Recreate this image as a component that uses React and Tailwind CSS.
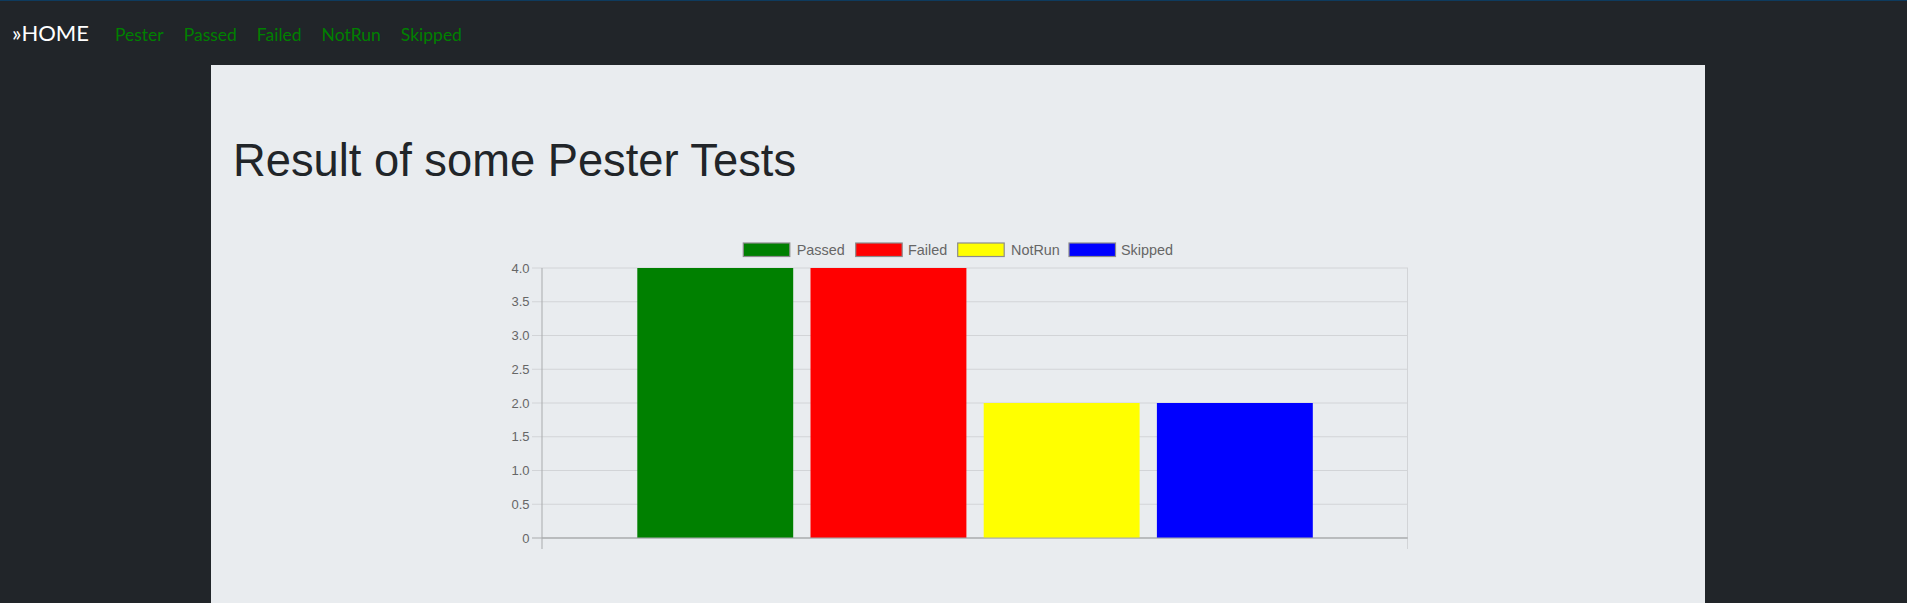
import React from "react";

// Chart data.
const results = [
    { name: "Passed", value: 4, color: "#008000" },
    { name: "Failed", value: 4, color: "#ff0000" },
    { name: "NotRun", value: 2, color: "#ffff00" },
    { name: "Skipped", value: 2, color: "#0000ff" },
];

const ticks = ["4.0", "3.5", "3.0", "2.5", "2.0", "1.5", "1.0", "0.5", "0"];

// Legend item positions (svg x).
const legend = [
    { box: 237.3, text: 290.7 },
    { box: 349.7, text: 402 },
    { box: 451.7, text: 505 },
    { box: 563, text: 615 },
];

function BarChart() {
    const top = 38;
    const zero = 308;
    const step = (zero - top) / 8;
    const left = 36;
    const right = 902;

    return (
        <svg width="904" height="330" className="mx-auto block" style={{ fontFamily: "'Liberation Sans', Arial, sans-serif" }}>
            {/* legend */}
            {results.map((r, i) => (
                <g key={r.name}>
                    <rect x={legend[i].box} y="13" width="46.5" height="13.5" fill={r.color} stroke="#8c8c8c" strokeWidth="1.2" />
                    <text x={legend[i].text} y="25" fontSize="14.4" fill="#666">{r.name}</text>
                </g>
            ))}

            {/* grid lines + y labels */}
            {ticks.map((t, i) => {
                const y = top + i * step;
                const isZero = i === ticks.length - 1;
                return (
                    <g key={t}>
                        <line x1={26} x2={right} y1={y} y2={y} stroke={isZero ? "#a9abad" : "#d2d4d7"} strokeWidth="1" />
                        <text x="23.5" y={y + 4.6} fontSize="13" fill="#666" textAnchor="end">{t}</text>
                    </g>
                );
            })}

            {/* bars */}
            {results.map((r, i) => {
                const h = (r.value / 4) * (zero - top);
                return (
                    <rect key={r.name} x={131.3 + i * 173.2} y={zero - h} width="155.9" height={h} fill={r.color} />
                );
            })}

            {/* axis lines */}
            <line x1={left} x2={left} y1={top} y2={319} stroke="#a9abad" strokeWidth="1" />
            <line x1={right - 0.5} x2={right - 0.5} y1={top} y2={319} stroke="#d2d4d7" strokeWidth="1" />
            <line x1={left} x2={right} y1={zero} y2={zero} stroke="#a9abad" strokeWidth="1" />
        </svg>
    );
}

function App() {
    return (
        <div className="min-h-screen bg-[#212529] border-t border-[#0e3b5e] overflow-hidden">
            {/* Navbar */}
            <div className="flex items-baseline pt-[21px] pl-[12px] h-[64px] font-['Lato',sans-serif] leading-none">
                <span className="text-white text-[22px]">»HOME</span>
                <div className="flex items-baseline gap-[20px] ml-[26px] text-[17.5px] text-[#008000]">
                    <a href="#">Pester</a>
                    <a href="#">Passed</a>
                    <a href="#">Failed</a>
                    <a href="#">NotRun</a>
                    <a href="#">Skipped</a>
                </div>
            </div>

            {/* Content panel */}
            <div className="ml-[211px] w-[1494px] h-[538px] bg-[#e9ecef] pt-[69px]">
                <h1 className="pl-[22px] text-[45.3px] leading-[54px] text-[#212529] font-['Liberation_Sans',Arial,sans-serif]">
                    Result of some Pester Tests
                </h1>
                <div className="mt-[42px]">
                    <BarChart />
                </div>
            </div>
        </div>
    );
}

export default App;
